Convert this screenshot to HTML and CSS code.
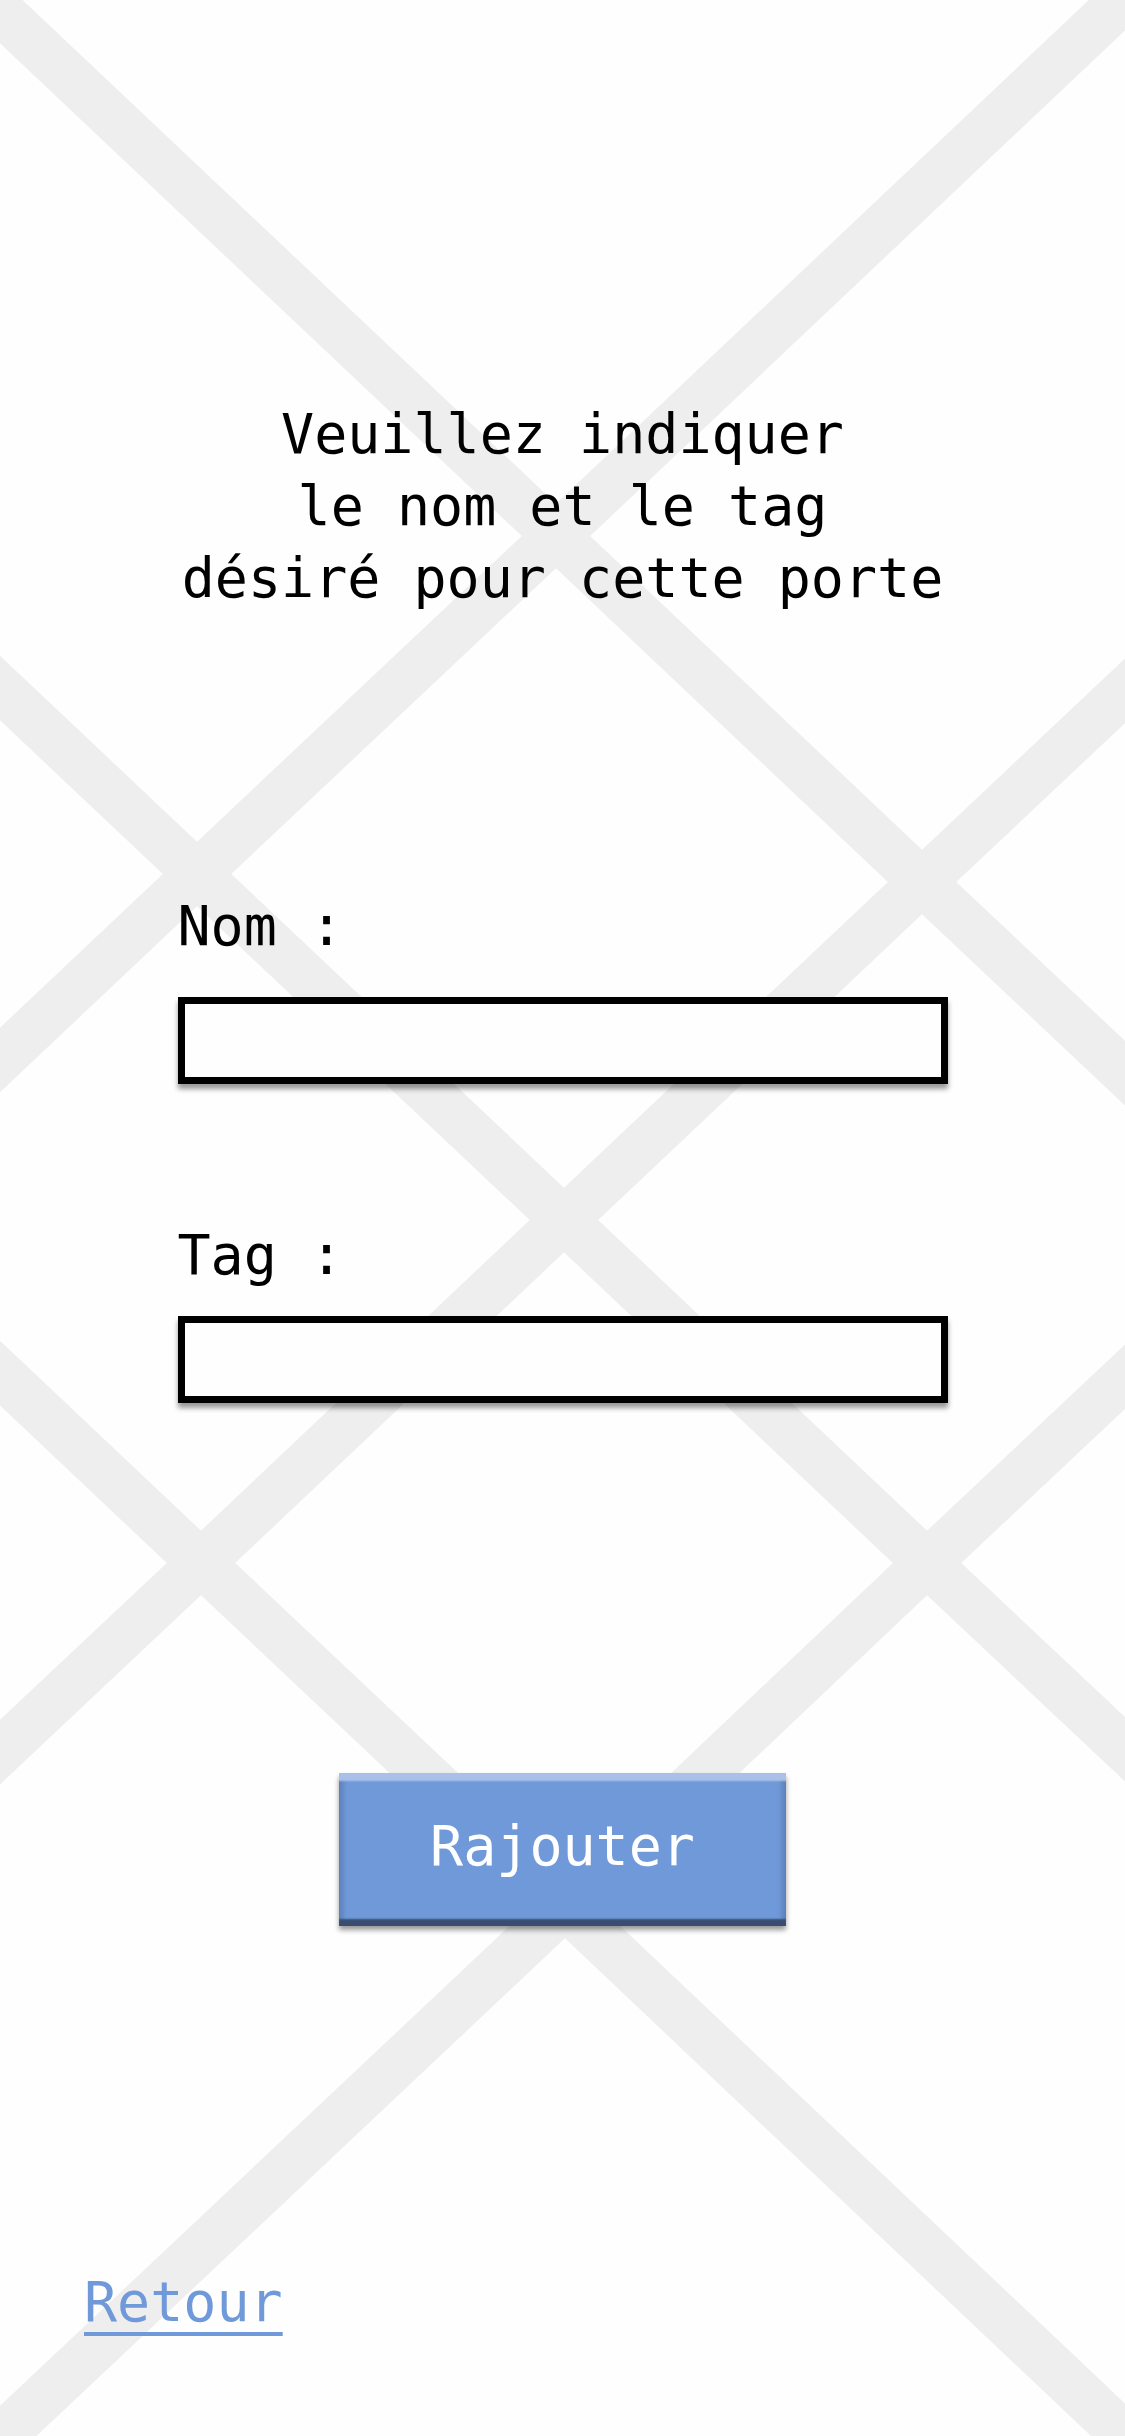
FILE: index.html
```html
<!DOCTYPE html>
<html lang="fr">
<head>
  <meta charset="utf-8">
  <meta name="viewport" content="width=device-width, initial-scale=1">
  <title>Rajouter une porte</title>
  <link rel="stylesheet" href="styles.css">
</head>
<body>
  <main class="page">
    <svg class="lattice" viewBox="0 0 1125 2436" preserveAspectRatio="none" aria-hidden="true">
      <path d="M-53 -39L556 536L922 882L1178 1123"/>
      <path d="M-53 638L197 874L564 1220L927 1563L1178 1799"/>
      <path d="M-53 1323L201 1563L565 1906L1178 2486"/>
      <path d="M1178 -52L556 536L197 874L-53 1110"/>
      <path d="M1178 641L922 882L564 1220L201 1563L-53 1802"/>
      <path d="M1178 1327L927 1563L565 1906L-53 2488"/>
    </svg>
    <h1 class="title">Veuillez indiquer<br>le nom et le tag<br>désiré pour cette porte</h1>
    <form class="form">
      <div class="field field-name">
        <label for="nom">Nom :</label>
        <input class="input" id="nom" name="nom" type="text">
      </div>
      <div class="field field-tag">
        <label for="tag">Tag :</label>
        <input class="input" id="tag" name="tag" type="text">
      </div>
      <button class="submit" type="submit">Rajouter</button>
    </form>
    <a class="back" href="#">Retour</a>
  </main>
</body>
</html>
```
FILE: styles.css
```css
* {
  box-sizing: border-box;
}

body {
  margin: 0;
  background: #fefefe;
  color: #000;
  font: 55px/72px "DejaVu Sans Mono", "Liberation Mono", monospace;
}

.page {
  position: relative;
  display: flex;
  flex-direction: column;
  align-items: center;
  min-height: 100vh;
  padding: 398px 84px 98px;
  overflow: hidden;
}

/* Decorative crossed bands behind the content */
.lattice {
  position: absolute;
  inset: 0;
  z-index: -1;
  width: 100%;
  height: 100%;
  fill: none;
  stroke: #eee;
  stroke-width: 47px;
}

.title {
  margin: 0;
  font: inherit;
  text-align: center;
}

.form {
  display: flex;
  flex-direction: column;
  width: 100%;
  max-width: 770px;
  margin-top: 276px;
}

.field {
  display: flex;
  flex-direction: column;
}

.field-name {
  gap: 35px;
}

.field-tag {
  gap: 25px;
  margin-top: 135px;
}

.input {
  width: 100%;
  height: 87px;
  padding: 0 16px;
  border: 7px solid #000;
  border-radius: 0;
  background: #fefefe;
  font: inherit;
  box-shadow: 0 5px 5px rgba(0, 0, 0, 0.4);
}

.submit {
  align-self: center;
  margin-top: 370px;
  padding: 37px 91px 44px;
  border: 0;
  background: #7099d9;
  color: #fff;
  font: inherit;
  box-shadow:
    inset 0 9px 2px -1px #a9c1e8,
    inset 0 -8px 2px -1px #384d70,
    inset 7px 0 5px -3px #5d80b8,
    inset -7px 0 5px -3px #5d80b8,
    0 4px 5px rgba(0, 0, 0, 0.4);
}

.back {
  align-self: flex-start;
  margin-top: auto;
  color: #7099d9;
  text-decoration-thickness: 4px;
  text-underline-offset: 11px;
}
```
